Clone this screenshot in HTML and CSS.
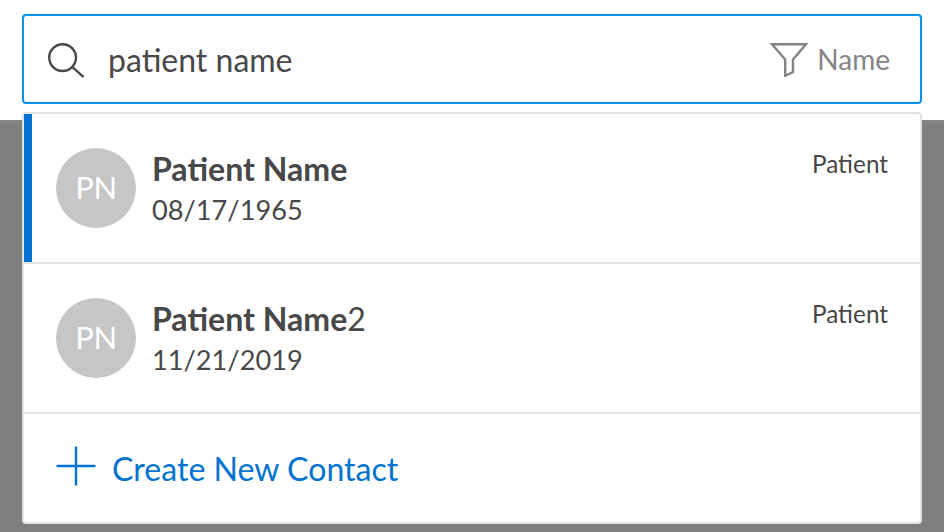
FILE: index.html
```html
<!DOCTYPE html>
<html lang="en">
<head>
    <meta charset="UTF-8">
    <meta name="viewport" content="width=device-width, initial-scale=1.0">
    <title>Patient Search</title>
    <link rel="stylesheet" href="styles.css">
</head>
<body>
    <div class="top-bar">
        <div class="search-box">
            <svg class="search-icon" width="38" height="38" viewBox="0 0 38 38" fill="none" stroke="#484848" stroke-width="2.4">
                <circle cx="14.6" cy="17.6" r="13.4"/>
                <path d="M24.5 27.2 L34.8 36.4" stroke-linecap="round"/>
            </svg>
            <span class="search-text">patient name</span>
            <svg class="filter-icon" width="40" height="36" viewBox="0 0 40 36" fill="none" stroke="#858585" stroke-width="2.4">
                <path d="M3 3.2 H37 L24 18.5 V31 L16.2 34.8 V18.5 Z"/>
            </svg>
            <span class="filter-text">Name</span>
        </div>
    </div>

    <div class="results">
        <div class="result active">
            <div class="avatar">PN</div>
            <div class="info">
                <div class="name"><b>Patient Name</b></div>
                <div class="dob">08/17/1965</div>
            </div>
            <div class="type">Patient</div>
        </div>
        <div class="result">
            <div class="avatar">PN</div>
            <div class="info">
                <div class="name"><b>Patient Name</b>2</div>
                <div class="dob">11/21/2019</div>
            </div>
            <div class="type">Patient</div>
        </div>
        <div class="create">
            <svg class="plus-icon" width="40" height="40" viewBox="0 0 40 40" stroke="#0274cf" stroke-width="2.4" stroke-linecap="round">
                <path d="M20 1.5 V38.5 M1.5 20 H38.5"/>
            </svg>
            <span>Create New Contact</span>
        </div>
    </div>
</body>
</html>
```

FILE: styles.css
```css
html, body {
    margin: 0;
    height: 100%;
    overflow: hidden;
}
body {
    position: relative;
    background: #7f7f7f;
    font-family: Lato, "Open Sans", sans-serif;
    color: #484848;
}
.top-bar {
    background: #fff;
    height: 120px;
    box-sizing: border-box;
    padding: 14px 22px 0;
    box-shadow: 0 1px 6px rgba(255, 255, 255, 0.15);
}
.search-box {
    display: flex;
    align-items: center;
    box-sizing: border-box;
    width: 900px;
    height: 90px;
    padding: 0 30px 0 24px;
    border: 2px solid #0a93ee;
    border-radius: 4px;
    background: #fff;
}
.search-text {
    margin-left: 22px;
    font-size: 32px;
}
.filter-icon {
    margin-left: auto;
}
.filter-text {
    margin-left: 8px;
    font-size: 28px;
    color: #858585;
}
.results {
    position: absolute;
    top: 112px;
    left: 22px;
    width: 900px;
    box-sizing: border-box;
    border: 2px solid #e2e2e2;
    border-radius: 4px;
    background: #fff;
}
.result {
    display: flex;
    align-items: flex-start;
    height: 150px;
    box-sizing: border-box;
    padding: 34px 32px 0;
    border-bottom: 2px solid #e2e2e2;
}
.result.active {
    box-shadow: inset 8px 0 0 #0274cf;
}
.avatar {
    flex: none;
    width: 80px;
    height: 80px;
    border-radius: 50%;
    background: #c6c6c6;
    color: #fff;
    font-size: 31px;
    letter-spacing: -0.5px;
    line-height: 78px;
    text-align: center;
}
.info {
    margin-left: 16px;
}
.name {
    font-size: 32.1px;
    line-height: 41px;
}
.dob {
    font-size: 27.2px;
    line-height: 42px;
}
.type {
    margin-left: auto;
    font-size: 24.3px;
    line-height: 31px;
}
.create {
    display: flex;
    align-items: center;
    height: 108px;
    padding-left: 32px;
    color: #0274cf;
    font-size: 32.1px;
}
.plus-icon {
    margin-bottom: 4px;
}
.create span {
    margin-left: 16px;
}
```
